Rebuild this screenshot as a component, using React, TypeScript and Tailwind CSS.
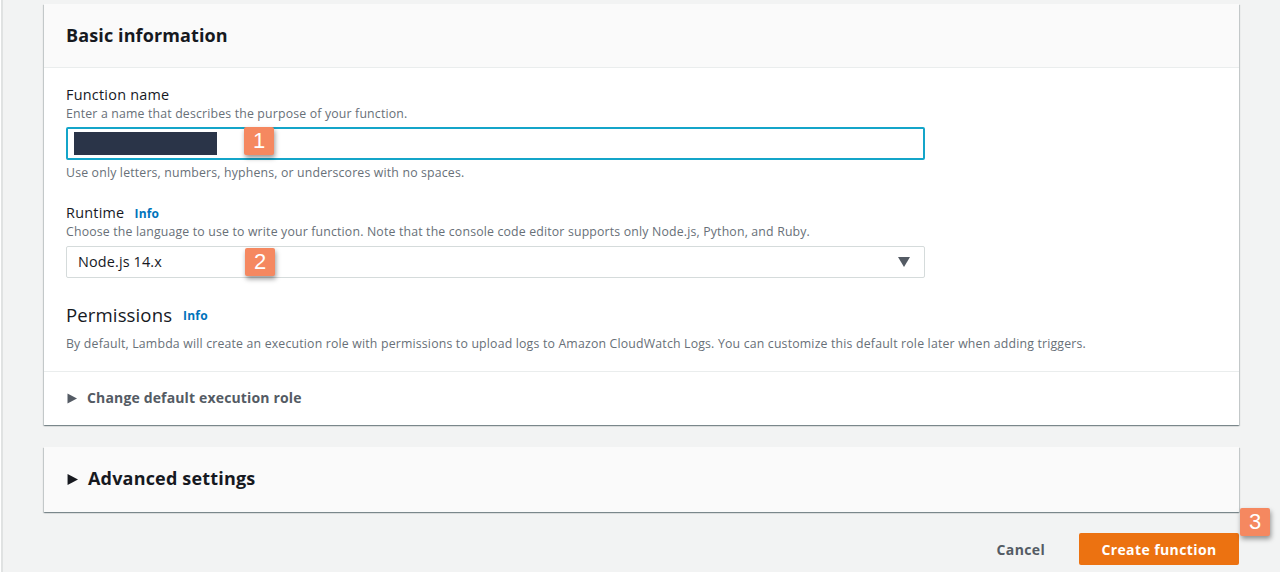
import React from "react";

const cardShadow =
  "shadow-[0_1px_1px_0_rgba(0,28,36,0.3),1px_1px_1px_0_rgba(0,28,36,0.15),-1px_1px_1px_0_rgba(0,28,36,0.15)]";

function Caret({ className }: { className: string }) {
  return (
    <svg viewBox="0 0 10 10" className={className} fill="currentColor">
      <path d="M0.5 0 L10 5 L0.5 10 Z" />
    </svg>
  );
}

function Badge({ n, className }: { n: number; className: string }) {
  return (
    <div
      className={
        "absolute flex h-[28px] w-[30px] items-center justify-center rounded-[2px] bg-[#f58860] text-[22px] leading-none text-white shadow-[1px_3px_5px_rgba(0,0,0,0.4)] " +
        className
      }
      style={{ fontFamily: '"Liberation Sans", Arial, sans-serif' }}
    >
      {n}
    </div>
  );
}

function Info() {
  return <span className="translate-y-[1px] text-[12px] font-bold tracking-[0.2px] text-[#0073bb]">Info</span>;
}

export default function App() {
  return (
    <div
      className="relative h-[572px] w-[1280px] overflow-hidden bg-[#f2f3f3] pl-[44px] pr-[41px] pt-[4px] text-[#16191f]"
      style={{ fontFamily: '"Open Sans", Arial, sans-serif' }}
    >
      <div className="absolute left-0 top-0 h-full w-[3px] border-l border-white bg-[#e0e2e2]" />

      {/* Basic information card */}
      <div className={"h-[421px] bg-white " + cardShadow}>
        <div className="flex h-[64px] items-center border-b border-[#eaeded] bg-[#fafafa] px-[22px]">
          <h2 className="-translate-y-[1px] text-[18px] font-bold leading-[22px] tracking-[0.12px]">Basic information</h2>
        </div>

        <div className="px-[22px] pt-[17px]">
          <div className="text-[14.4px] leading-[20px] tracking-[0.25px]">Function name</div>
          <div className="mt-[1px] text-[12.3px] leading-[16px] tracking-[0.17px] text-[#687078]">
            Enter a name that describes the purpose of your function.
          </div>
          <div className="mt-[5px] flex h-[33px] w-[859px] items-center rounded-[2px] border-[2px] border-[#14a5c9] pl-[6px]">
            <div className="h-[23px] w-[143px] bg-[#2a3448]" />
          </div>
          <div className="mt-[5px] text-[12.3px] leading-[16px] tracking-[0.17px] text-[#687078]">
            Use only letters, numbers, hyphens, or underscores with no spaces.
          </div>

          <div className="mt-[22px] flex items-center gap-[10px] text-[14.4px] leading-[20px] tracking-[0.25px]">
            <span>Runtime</span>
            <Info />
          </div>
          <div className="mt-[1px] text-[12.3px] leading-[16px] tracking-[0.17px] text-[#687078]">
            Choose the language to use to write your function. Note that the console code editor supports only Node.js, Python, and Ruby.
          </div>
          <div className="mt-[6px] flex h-[32px] w-[859px] items-center justify-between rounded-[2px] border border-[#d5dbdb] pl-[11px] pr-[14px] text-[14.4px] tracking-[0.15px]">
            <span>Node.js 14.x</span>
            <svg viewBox="0 0 12 10" className="h-[10px] w-[12px] text-[#545b64]" fill="currentColor">
              <path d="M0 0 H12 L6 10 Z" />
            </svg>
          </div>

          <div className="mt-[25px] flex items-center gap-[11px] text-[18.6px] leading-[24px] tracking-[0.1px]">
            <span>Permissions</span>
            <Info />
          </div>
          <div className="mt-[9px] text-[12.3px] leading-[16px] tracking-[0.18px] text-[#687078]">
            By default, Lambda will create an execution role with permissions to upload logs to Amazon CloudWatch Logs. You can customize this default role later when adding triggers.
          </div>
        </div>

        <div className="mt-[19px] flex h-[53px] items-center gap-[10px] border-t border-[#eaeded] px-[23px]">
          <Caret className="h-[11px] w-[10px] text-[#545b64]" />
          <span className="-translate-y-[1px] text-[14px] font-bold tracking-[0.15px] text-[#545b64]">Change default execution role</span>
        </div>
      </div>

      {/* Advanced settings card */}
      <div className={"mt-[22px] flex h-[65px] items-center gap-[10px] bg-[#fafafa] px-[23px] " + cardShadow}>
        <Caret className="h-[11px] w-[11px] text-[#16191f]" />
        <span className="-translate-y-[1px] text-[18px] font-bold tracking-[0.18px]">Advanced settings</span>
      </div>

      {/* Footer actions */}
      <div className="mt-[21px] flex items-center justify-end">
        <span className="mr-[34px] text-[14px] font-bold tracking-[0.35px] text-[#545b64]">Cancel</span>
        <div className="flex h-[32px] w-[160px] items-center justify-center rounded-[2px] bg-[#ec7211] text-[14px] font-bold tracking-[0.4px] text-white">
          Create function
        </div>
      </div>

      <Badge n={1} className="left-[244px] top-[127px]" />
      <Badge n={2} className="left-[245px] top-[248px]" />
      <Badge n={3} className="left-[1240px] top-[508px]" />
    </div>
  );
}
